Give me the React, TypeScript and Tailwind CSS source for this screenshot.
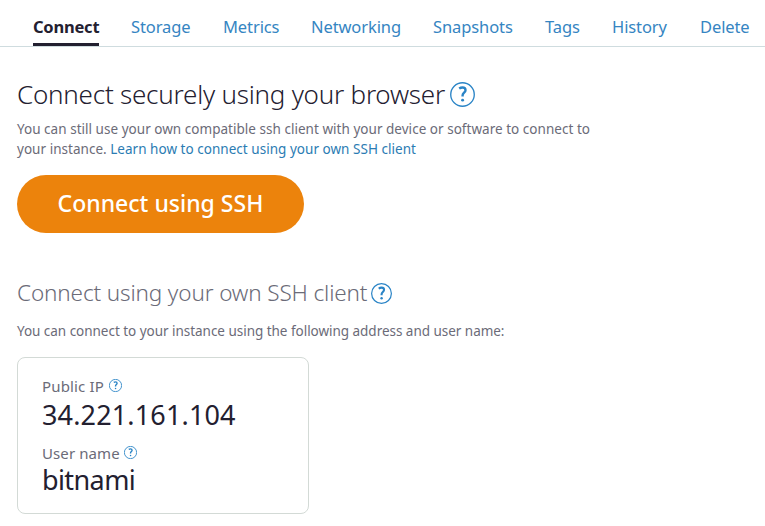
const tabs = [
  { label: "Storage", cls: "w-[60px]" },
  { label: "Metrics", cls: "w-[56px]" },
  { label: "Networking", cls: "w-[90px]" },
  { label: "Snapshots", cls: "w-[80px]" },
  { label: "Tags", cls: "w-[35px]" },
  { label: "History", cls: "w-[56px]" },
  { label: "Delete", cls: "w-[50px]" },
];

function Help({ className, stroke }: { className: string; stroke: number }) {
  return (
    <svg viewBox="0 0 24 24" fill="none" stroke="#2a84c6" className={`shrink-0 ${className}`}>
      <circle cx="12" cy="12" r="11.3" strokeWidth={stroke} />
      <path d="M8.8 6.3C10 5.5 11 5.3 12 5.3c1.9 0 2.9 1 2.9 2.5 0 2.4-2.8 2.6-2.8 5v1.1" strokeWidth={stroke + 1} />
      <circle cx="12.1" cy="17.4" r="1.4" fill="#2a84c6" stroke="none" />
    </svg>
  );
}

export default function App() {
  return (
    <div className="h-[526px] w-[765px] overflow-hidden bg-white font-['Noto_Sans',sans-serif] text-[#6b6b78]">
      <nav className="flex h-[47px] gap-8 border-b border-[#cfdcdf] pl-[33px] text-[16.5px] leading-[26px] tracking-[-0.1px] whitespace-nowrap text-[#3585c2]">
        <div className="-mb-px h-[46px] w-[66px] border-b-[3px] border-[#232030] pt-[14px] font-bold tracking-[-0.22px] text-[#232030]">
          <span>Connect</span>
        </div>
        {tabs.map((t) => (
          <a key={t.label} className={`pt-[14px] ${t.cls}`}><span>{t.label}</span></a>
        ))}
      </nav>
      <main className="flex flex-col items-start pl-[17px] whitespace-nowrap">
        <h1 className="mt-[28px] flex h-[40px] items-center text-[26px] font-light tracking-[-0.23px] text-[#232030]">
          <span className="w-[433px] pb-[2px]">Connect securely using your browser</span>
          <Help className="mb-px size-[25px]" stroke={1.3} />
        </h1>
        <p className="mt-[4px] text-[13.5px] leading-[20px] tracking-[0.03px]">
          <span>You can still use your own compatible ssh client with your device or software to connect to</span>
          <br />
          <span>your instance. <a className="text-[#2b7cb3]">Learn how to connect using your own SSH client</a></span>
        </p>
        <button className="mt-[16px] flex h-[58px] w-[287px] items-center justify-center rounded-full bg-[#ec830c] pb-[2px] text-[23px] font-medium text-white">
          <span>Connect using SSH</span>
        </button>
        <h2 className="mt-[42px] flex h-[36px] items-center text-[22.5px] font-light tracking-[-0.13px]">
          <span className="w-[354px]">Connect using your own SSH client</span>
          <Help className="size-[21px]" stroke={1.4} />
        </h2>
        <p className="mt-[10px] text-[13.5px] leading-[20px] tracking-[-0.03px]"><span>You can connect to your instance using the following address and user name:</span></p>
        <section className="mt-[16px] h-[157px] w-[292px] rounded-[8px] border border-[#d3dad6] pt-[17px] pl-[24px]">
          <div className="flex h-[22px] items-center text-[15px] tracking-[0.15px]">
            <span className="w-[67px]">Public IP</span>
            <Help className="mb-px size-[13px]" stroke={1.6} />
          </div>
          <div className="text-[27px] leading-[36px] tracking-[0.15px] text-[#232030]"><span>34.221.161.104</span></div>
          <div className="mt-[9px] flex h-[22px] items-center text-[15px] tracking-[0.1px]">
            <span className="w-[82px]">User name</span>
            <Help className="mb-px size-[13px]" stroke={1.6} />
          </div>
          <div className="text-[27px] leading-[32px] tracking-[-0.6px] text-[#232030]"><span>bitnami</span></div>
        </section>
      </main>
    </div>
  );
}
